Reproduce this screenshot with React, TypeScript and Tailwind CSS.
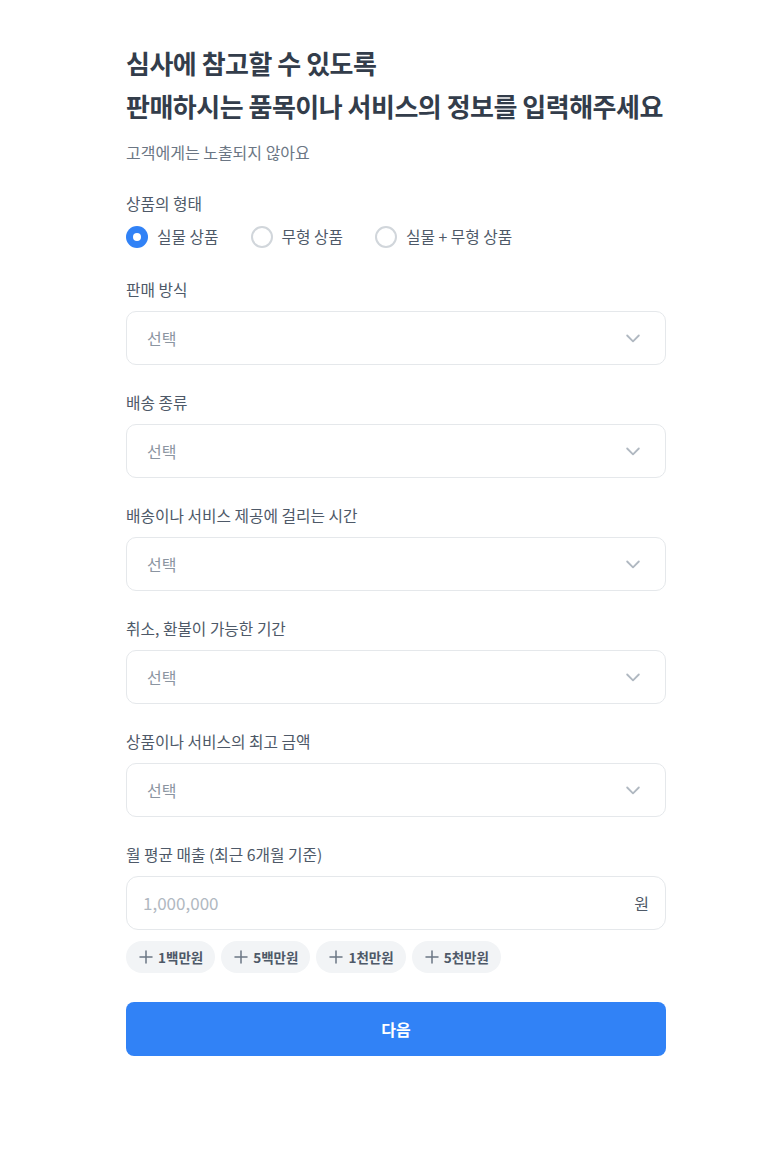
import { useState } from "react";

const selects = [
  "판매 방식",
  "배송 종류",
  "배송이나 서비스 제공에 걸리는 시간",
  "취소, 환불이 가능한 기간",
  "상품이나 서비스의 최고 금액",
];

const kinds = ["실물 상품", "무형 상품", "실물 + 무형 상품"];
const chips = ["1백만원", "5백만원", "1천만원", "5천만원"];

function Chevron() {
  return (
    <svg width="20" height="20" viewBox="0 0 24 24" fill="none">
      <path
        d="M5 9l7 7 7-7"
        stroke="#b0b8c1"
        strokeWidth="2.2"
        strokeLinecap="round"
        strokeLinejoin="round"
      />
    </svg>
  );
}

function Plus() {
  return (
    <svg width="18" height="18" viewBox="0 0 24 24" fill="none">
      <path d="M12 4v16M4 12h16" stroke="#6b7684" strokeWidth="2" strokeLinecap="round" />
    </svg>
  );
}

export default function App() {
  const [kind, setKind] = useState(0);

  return (
    <main
      className="min-h-[1150px] bg-white"
      style={{ fontFamily: '"Noto Sans CJK KR", "Noto Sans", sans-serif' }}
    >
      <div className="ml-[126px] w-[540px] pt-[41px] pb-20">
        <h1 className="text-[26px] font-bold leading-[43px] tracking-[-0.5px] text-[#333d4b]">
          심사에 참고할 수 있도록
          <br />
          판매하시는 품목이나 서비스의 정보를 입력해주세요
        </h1>
        <p className="mt-[14px] text-[16px] leading-[22px] text-[#6b7684]">
          고객에게는 노출되지 않아요
        </p>

        <div className="mt-[30px] text-[15.75px] leading-[22px] text-[#4e5968]">상품의 형태</div>
        <div className="mt-[11px] flex h-[22px] items-center gap-[32px]">
          {kinds.map((k, i) => (
            <button
              key={k}
              type="button"
              onClick={() => setKind(i)}
              className="flex items-center gap-[9px] text-[15.75px] text-[#4e5968]"
            >
              {kind === i ? (
                <span className="flex h-[22px] w-[22px] items-center justify-center rounded-full bg-[#3182f6]">
                  <span className="h-[8px] w-[8px] rounded-full bg-white" />
                </span>
              ) : (
                <span className="h-[22px] w-[22px] rounded-full border-2 border-[#d1d6db]" />
              )}
              {k}
            </button>
          ))}
        </div>

        <div className="mt-[31px] flex flex-col gap-[27px]">
          {selects.map((s) => (
            <div key={s}>
              <div className="text-[15.75px] leading-[22px] text-[#4e5968]">{s}</div>
              <div className="mt-[10px] flex h-[54px] items-center justify-between rounded-[10px] border border-[#e5e8eb] pl-[20px] pr-[22px]">
                <span className="text-[16px] text-[#8b95a1]">선택</span>
                <Chevron />
              </div>
            </div>
          ))}

          <div>
            <div className="text-[15.75px] leading-[22px] text-[#4e5968]">월 평균 매출 (최근 6개월 기준)</div>
            <div className="mt-[10px] flex h-[54px] items-center justify-between rounded-[12px] border border-[#e5e8eb] pl-[16px] pr-[16px]">
              <input
                className="w-full bg-transparent text-[17px] text-[#333d4b] outline-none placeholder:text-[#b0b8c1]"
                placeholder="1,000,000"
                style={{ fontFamily: "inherit" }}
              />
              <span className="shrink-0 text-[16px] text-[#4e5968]">원</span>
            </div>
            <div className="mt-[11px] flex gap-[6px]">
              {chips.map((c) => (
                <button
                  key={c}
                  type="button"
                  className="flex h-[32px] items-center gap-[3px] rounded-full bg-[#f2f4f6] pl-[11px] pr-[12px] text-[13.5px] font-bold text-[#4e5968]"
                >
                  <Plus />
                  {c}
                </button>
              ))}
            </div>
          </div>
        </div>

        <button
          type="button"
          className="mt-[29px] h-[54px] w-full rounded-[8px] bg-[#3182f6] text-[16px] font-bold text-white"
        >
          다음
        </button>
      </div>
    </main>
  );
}
